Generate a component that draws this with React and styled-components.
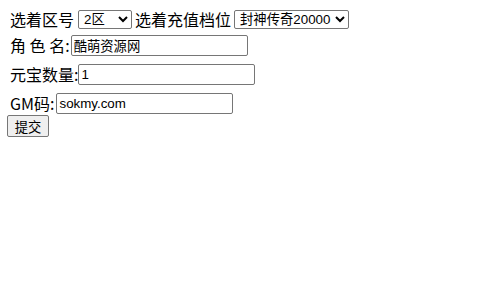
import styled, { createGlobalStyle } from 'styled-components';

const GlobalStyle = createGlobalStyle`
  html, body {
    margin: 0;
    padding: 0;
    background: #ffffff;
  }
  body {
    padding: 8px;
    font-family: "Liberation Sans", "Noto Sans CJK SC", sans-serif;
    font-size: 16px;
    color: #000;
  }
`;

const Form = styled.form`
  display: flex;
  flex-direction: column;
  align-items: flex-start;
`;

const Row = styled.div`
  display: flex;
  align-items: center;
  height: 23px;
  margin-top: ${(p) => p.$gap || 0}px;
  white-space: pre;
`;

const Label = styled.span`
  font-family: "Noto Sans CJK SC", sans-serif;
  font-size: 16px;
  line-height: 23px;
  margin-left: ${(p) => p.$left ?? 2}px;
  margin-right: ${(p) => p.$right || 0}px;
`;

const Select = styled.select`
  box-sizing: border-box;
  width: ${(p) => p.$width}px;
  height: 19px;
  padding: 0 0 0 1px;
  border: 1px solid #767676;
  border-radius: 2px;
  background: #fff;
  color: #000;
  font-family: "Liberation Sans", "Noto Sans CJK SC", sans-serif;
  font-size: 13.33px;
`;

const Input = styled.input`
  box-sizing: border-box;
  width: 177px;
  height: 21px;
  margin: 0;
  padding: 1px 2px;
  border: 1px solid #767676;
  border-radius: 2px;
  color: #000;
  font-family: "Liberation Sans", "Noto Sans CJK SC", sans-serif;
  font-size: 13.33px;
`;

const Submit = styled.button`
  box-sizing: border-box;
  width: 42px;
  height: 22px;
  margin: 0 0 0 -1px;
  padding: 0;
  border: 1px solid #767676;
  border-radius: 2px;
  background: #efefef;
  color: #000;
  font-family: "Noto Sans CJK SC", sans-serif;
  font-size: 13.33px;
`;

const zones = ['1区', '2区', '3区'];
const tiers = ['封神传奇20000', '封神传奇10000'];

export default function App() {
  return (
    <>
      <GlobalStyle />
      <Form onSubmit={(e) => e.preventDefault()}>
        <Row>
          <Label $right={4}>选着区号</Label>
          <Select $width={54} defaultValue="2区">
            {zones.map((z) => (
              <option key={z}>{z}</option>
            ))}
          </Select>
          <Label $left={3} $right={3}>选着充值档位</Label>
          <Select $width={115} defaultValue="封神传奇20000">
            {tiers.map((t) => (
              <option key={t}>{t}</option>
            ))}
          </Select>
        </Row>
        <Row $gap={3}>
          <Label $right={1}>角 色 名:</Label>
          <Input defaultValue="酷萌资源网" />
        </Row>
        <Row $gap={6}>
          <Label>元宝数量:</Label>
          <Input defaultValue="1" />
        </Row>
        <Row $gap={6}>
          <Label $right={2}>GM码:</Label>
          <Input defaultValue="sokmy.com" />
        </Row>
        <Submit type="submit">提交</Submit>
      </Form>
    </>
  );
}
